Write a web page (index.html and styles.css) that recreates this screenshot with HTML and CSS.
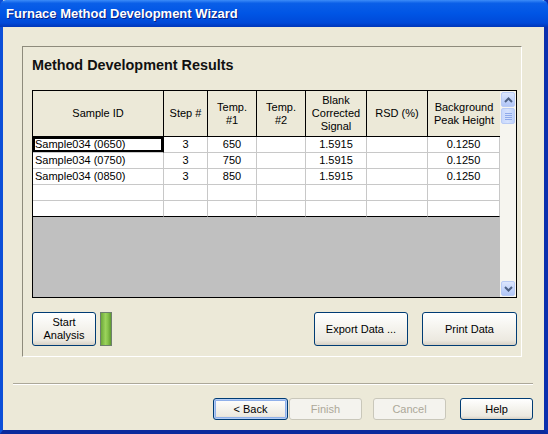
FILE: index.html
```html
<!DOCTYPE html>
<html lang="en">
<head>
    <meta charset="UTF-8">
    <title>Furnace Method Development Wizard</title>
    <link rel="stylesheet" href="styles.css">
</head>
<body>
    <div class="window">
        <div class="title-bar">Furnace Method Development Wizard</div>
        <div class="client">
            <div class="group">
                <div class="group-title">Method Development Results</div>
                <div class="grid-box">
                    <div class="grid-main">
                        <div class="grid">
                            <div class="hd">Sample ID</div>
                            <div class="hd">Step #</div>
                            <div class="hd">Temp.<br>#1</div>
                            <div class="hd">Temp.<br>#2</div>
                            <div class="hd">Blank<br>Corrected<br>Signal</div>
                            <div class="hd">RSD (%)</div>
                            <div class="hd">Background<br>Peak Height</div>

                            <div class="cell left selected">Sample034 (0650)</div>
                            <div class="cell">3</div>
                            <div class="cell">650</div>
                            <div class="cell"></div>
                            <div class="cell">1.5915</div>
                            <div class="cell"></div>
                            <div class="cell">0.1250</div>

                            <div class="cell left">Sample034 (0750)</div>
                            <div class="cell">3</div>
                            <div class="cell">750</div>
                            <div class="cell"></div>
                            <div class="cell">1.5915</div>
                            <div class="cell"></div>
                            <div class="cell">0.1250</div>

                            <div class="cell left">Sample034 (0850)</div>
                            <div class="cell">3</div>
                            <div class="cell">850</div>
                            <div class="cell"></div>
                            <div class="cell">1.5915</div>
                            <div class="cell"></div>
                            <div class="cell">0.1250</div>

                            <div class="cell"></div><div class="cell"></div><div class="cell"></div><div class="cell"></div><div class="cell"></div><div class="cell"></div><div class="cell"></div>

                            <div class="cell last"></div><div class="cell last"></div><div class="cell last"></div><div class="cell last"></div><div class="cell last"></div><div class="cell last"></div><div class="cell last"></div>
                        </div>
                    </div>
                    <div class="scrollbar">
                        <div class="sb-btn">
                            <svg width="9" height="6" viewBox="0 0 9 6"><path d="M1 5 L4.5 1.5 L8 5" fill="none" stroke="#4d6185" stroke-width="2"/></svg>
                        </div>
                        <div class="sb-thumb">
                            <span></span><span></span><span></span><span></span>
                        </div>
                        <div class="sb-track"></div>
                        <div class="sb-btn">
                            <svg width="9" height="6" viewBox="0 0 9 6"><path d="M1 1 L4.5 4.5 L8 1" fill="none" stroke="#4d6185" stroke-width="2"/></svg>
                        </div>
                    </div>
                </div>
                <div class="group-actions">
                    <button class="xp-btn start-btn">Start<br>Analysis</button>
                    <div class="indicator"></div>
                    <div class="spacer"></div>
                    <button class="xp-btn export-btn">Export Data ...</button>
                    <button class="xp-btn print-btn">Print Data</button>
                </div>
            </div>
            <div class="separator"></div>
            <div class="wizard-buttons">
                <button class="xp-btn nav-btn back-btn">&lt; Back</button>
                <button class="xp-btn nav-btn finish-btn" disabled>Finish</button>
                <button class="xp-btn nav-btn cancel-btn" disabled>Cancel</button>
                <button class="xp-btn nav-btn help-btn">Help</button>
            </div>
        </div>
    </div>
</body>
</html>
```

FILE: styles.css
```css
body {
    margin: 0;
    background-color: #ece9d8;
    font-family: "Liberation Sans", Arial, sans-serif;
    font-size: 11px;
}
.window {
    width: 548px;
    height: 434px;
    box-sizing: border-box;
    display: flex;
    flex-direction: column;
    border-left: 3px solid #0c4fd8;
    border-right: 4px solid #0a2fae;
    border-bottom: 4px solid #0b2a9c;
    background-color: #ece9d8;
}
.title-bar {
    height: 27px;
    margin: 0 -4px 0 -3px;
    padding-left: 6px;
    box-sizing: border-box;
    line-height: 27px;
    color: white;
    font-weight: bold;
    font-size: 13px;
    text-shadow: 1px 1px 0 #0a1e80;
    background: linear-gradient(to bottom, #3c8cf8 0%, #0a5fe8 12%, #0055e5 50%, #0049d8 85%, #0036b8 100%);
    border-radius: 6px 6px 0 0;
}
.client {
    flex: 1;
    display: flex;
    flex-direction: column;
    padding: 19px 0 10px 0;
}
.group {
    margin-left: 19px;
    margin-right: 22px;
    height: 311px;
    box-sizing: border-box;
    border-top: 1px solid #8e8b7c;
    border-left: 1px solid #8e8b7c;
    border-right: 1px solid #fff;
    border-bottom: 1px solid #fff;
    padding: 10px 5px 0 9px;
}
.group-title {
    font-size: 14.4px;
    font-weight: bold;
    line-height: 17px;
    color: #111;
}
.grid-box {
    margin-top: 16px;
    width: 485px;
    height: 208px;
    box-sizing: border-box;
    border: 1px solid #000;
    display: flex;
}
.grid-main {
    flex: 1;
    background-color: #c0c0c0;
}
.grid {
    display: grid;
    grid-template-columns: 131px 44px 49px 49px 61px 61px 72px;
    grid-template-rows: 46px repeat(5, 16px);
    background-color: white;
}
.hd {
    background-color: #ece9d8;
    border-right: 1px solid #000;
    border-bottom: 1px solid #000;
    display: flex;
    align-items: center;
    justify-content: center;
    text-align: center;
    line-height: 13px;
    color: #000;
}
.hd:nth-child(7) {
    border-right: none;
}
.cell {
    border-right: 1px solid #c8c8c8;
    border-bottom: 1px solid #c8c8c8;
    text-align: center;
    line-height: 15px;
    color: #000;
    white-space: nowrap;
    overflow: hidden;
}
.cell.left {
    text-align: left;
    padding-left: 2px;
}
.cell.last {
    border-bottom-color: #000;
}
.cell.selected {
    box-shadow: inset 0 0 0 2px #000;
    border-right-color: #000;
}
.scrollbar {
    width: 16px;
    display: flex;
    flex-direction: column;
    background-color: #f6f5ef;
    padding: 1px 0;
    box-sizing: border-box;
}
.sb-btn {
    height: 15px;
    margin: 0 1px;
    border: 1px solid #b9cbf5;
    border-radius: 2px;
    background: linear-gradient(to bottom, #dce6fd, #c1d3fb 60%, #b2c6f6);
    display: flex;
    align-items: center;
    justify-content: center;
    box-sizing: border-box;
}
.sb-thumb {
    height: 16px;
    margin: 1px 1px 0 1px;
    border: 1px solid #b9cbf5;
    border-radius: 2px;
    background: linear-gradient(to right, #c8d8fc, #d6e2fd 50%, #bcd0fa);
    box-sizing: border-box;
    display: flex;
    flex-direction: column;
    align-items: center;
    justify-content: center;
    gap: 1px;
}
.sb-thumb span {
    width: 7px;
    height: 1px;
    background-color: #8faaea;
}
.sb-track {
    flex: 1;
}
.group-actions {
    display: flex;
    align-items: center;
    margin-top: 14px;
    height: 34px;
    width: 485px;
}
.spacer {
    flex: 1;
}
.xp-btn {
    font-family: "Liberation Sans", Arial, sans-serif;
    font-size: 11px;
    color: #000;
    border: 1px solid #003c74;
    border-radius: 3px;
    background: linear-gradient(to bottom, #ffffff 0%, #f6f5f0 40%, #ece9e0 85%, #d6d0c5 100%);
    padding: 0;
    line-height: 13px;
}
.start-btn {
    width: 64px;
    height: 34px;
}
.indicator {
    width: 10px;
    height: 32px;
    margin-left: 4px;
    border: 1px solid #6e7f6e;
    background: linear-gradient(to right, #6da83a, #9bd35c 45%, #86c24a 70%, #5f9a30);
}
.export-btn {
    width: 94px;
    height: 34px;
}
.print-btn {
    width: 95px;
    height: 34px;
    margin-left: 14px;
}
.separator {
    margin: 26px 11px 0 10px;
    height: 0;
    border-top: 1px solid #aca899;
    border-bottom: 1px solid #fff;
}
.wizard-buttons {
    display: flex;
    justify-content: flex-end;
    margin-top: 13px;
    padding-right: 11px;
}
.nav-btn {
    height: 22px;
    width: 73px;
}
.back-btn {
    width: 75px;
    box-shadow: inset 0 0 0 1px #b4cdf5, inset 0 0 0 2px #8fb0ea;
}
.finish-btn {
    margin-left: 1px;
}
.cancel-btn {
    margin-left: 11px;
}
.help-btn {
    margin-left: 14px;
}
.xp-btn:disabled {
    color: #aca899;
    border-color: #c9c7ba;
    background: #f4f3ee;
}
```
